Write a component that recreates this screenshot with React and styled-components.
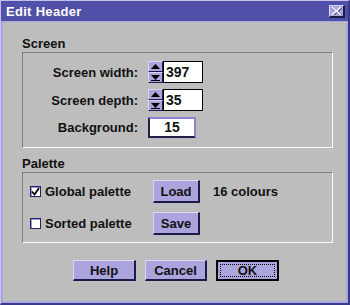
import styled, { createGlobalStyle } from "styled-components";

const GlobalStyle = createGlobalStyle`
  html, body {
    margin: 0;
    padding: 0;
    background: #3a3a8c;
  }
  body {
    font-family: "Liberation Sans", Arial, sans-serif;
    font-weight: bold;
    font-size: 13px;
    color: #111;
  }
`;

const Window = styled.div`
  width: 350px;
  height: 305px;
  box-sizing: border-box;
  display: flex;
  flex-direction: column;
  border-left: 1px solid #c8c0ec;
  border-top: 1px solid #c8c0ec;
  border-right: 2px solid #3a3a8c;
  border-bottom: 2px solid #3a3a8c;
  background: #5050a8;
`;

const TitleBar = styled.div`
  height: 20px;
  display: flex;
  align-items: center;
  justify-content: space-between;
  padding: 0 3px 0 5px;
  background: #5050a8;
  color: #fff;
  font-size: 13px;
  letter-spacing: 0.3px;
`;

const CloseButton = styled.div`
  width: 16px;
  height: 13px;
  box-sizing: border-box;
  display: flex;
  align-items: center;
  justify-content: center;
  background: #aca4dc;
  border-top: 1px solid #d8d2f4;
  border-left: 1px solid #d8d2f4;
  border-right: 2px solid #1c1c48;
  border-bottom: 2px solid #1c1c48;
`;

const Body = styled.div`
  flex: 1;
  display: flex;
  flex-direction: column;
  background: #bdbdbd;
  border: 2px solid #aca4dc;
  border-top-width: 1px;
  padding: 14px 13px 0 19px;
`;

const GroupLabel = styled.div`
  line-height: 15px;
  margin: ${(p) => (p.$first ? "0" : "8px")} 0 1px;
`;

const GroupBox = styled.div`
  border: 1px solid;
  border-color: #7c7c7c #fafafa #fafafa #7c7c7c;
  padding: ${(p) => p.$pad};
`;

const FieldGrid = styled.div`
  display: grid;
  grid-template-columns: 115px auto;
  column-gap: 10px;
  row-gap: 6px;
  align-items: center;
`;

const FieldLabel = styled.div`
  text-align: right;
`;

const Spin = styled.div`
  display: flex;
`;

const SpinButtons = styled.div`
  display: flex;
  flex-direction: column;
  width: 15px;
`;

const SpinButton = styled.div`
  height: 11px;
  box-sizing: border-box;
  display: flex;
  align-items: center;
  justify-content: center;
  background: #aca4dc;
  border-top: 1px solid #dcd6f6;
  border-left: 1px solid #dcd6f6;
  border-right: 1px solid #1c1c48;
  border-bottom: 1px solid #1c1c48;
`;

const NumberInput = styled.div`
  width: 40px;
  height: 22px;
  box-sizing: border-box;
  background: #fff;
  border: 1px solid #000;
  padding: 2px 0 0 2px;
  font-size: 14px;
  line-height: 17px;
`;

const DisplayField = styled.div`
  width: 48px;
  height: 21px;
  box-sizing: border-box;
  background: #fff;
  border: 2px solid;
  border-color: #8c84d0 #8c84d0 #20204a #20204a;
  text-align: center;
  font-size: 14px;
  line-height: 17px;
`;

const PaletteGrid = styled.div`
  display: grid;
  grid-template-columns: 123px 47px auto;
  row-gap: 9px;
  align-items: center;
`;

const CheckLabel = styled.div`
  display: flex;
  align-items: center;
  gap: 4px;
`;

const CheckBox = styled.div`
  width: 11px;
  height: 11px;
  box-sizing: border-box;
  display: flex;
  align-items: center;
  justify-content: center;
  background: #fff;
  border: 1px solid #24245a;
  box-shadow: inset 1px 1px 0 #9c94d8;
`;

const Button = styled.div`
  width: ${(p) => p.$w}px;
  height: ${(p) => p.$h}px;
  box-sizing: border-box;
  display: flex;
  align-items: center;
  justify-content: center;
  background: #aca4dc;
  border-top: 1px solid #dcd6f6;
  border-left: 1px solid #dcd6f6;
  border-right: 2px solid #1c1c48;
  border-bottom: 2px solid #1c1c48;
  font-size: 13px;
`;

const DefaultButton = styled.div`
  width: 63px;
  height: 21px;
  box-sizing: border-box;
  border: 2px solid #000;
  display: flex;
`;

const FocusFace = styled.div`
  flex: 1;
  display: flex;
  align-items: center;
  justify-content: center;
  background: #aca4dc;
  outline: 1px dotted #000;
  outline-offset: -3px;
`;

const Colours = styled.div`
  margin-left: 13px;
`;

const ButtonRow = styled.div`
  display: flex;
  justify-content: center;
  gap: 9px;
  margin-top: 17px;
  padding-right: 3px;
`;

const UpArrow = () => (
  <svg width="9" height="6" viewBox="0 0 9 6">
    <polygon points="4.5,0 9,5 0,5" fill="#000" />
  </svg>
);

const DownArrow = () => (
  <svg width="9" height="6" viewBox="0 0 9 6">
    <polygon points="0,0 9,0 4.5,5" fill="#000" />
    <rect x="0" y="5" width="9" height="1" fill="#000" />
  </svg>
);

const CloseIcon = () => (
  <svg width="11" height="8" viewBox="0 0 11 8">
    <path d="M1 0 L10 8 M10 0 L1 8" stroke="#3a3a8c" strokeWidth="2" transform="translate(0.6,0.6)" />
    <path d="M1 0 L10 8 M10 0 L1 8" stroke="#fff" strokeWidth="1.6" />
  </svg>
);

const Tick = () => (
  <svg width="9" height="9" viewBox="0 0 9 9">
    <path d="M1 4.5 L3.5 7.5 L8 1" stroke="#000" strokeWidth="1.8" fill="none" />
  </svg>
);

function SpinField({ value }) {
  return (
    <Spin>
      <SpinButtons>
        <SpinButton><UpArrow /></SpinButton>
        <SpinButton><DownArrow /></SpinButton>
      </SpinButtons>
      <NumberInput>{value}</NumberInput>
    </Spin>
  );
}

export default function App() {
  return (
    <>
      <GlobalStyle />
      <Window>
        <TitleBar>
          <span>Edit Header</span>
          <CloseButton><CloseIcon /></CloseButton>
        </TitleBar>
        <Body>
          <GroupLabel $first>Screen</GroupLabel>
          <GroupBox $pad="8px 0 9px 0">
            <FieldGrid>
              <FieldLabel>Screen width:</FieldLabel>
              <SpinField value="397" />
              <FieldLabel>Screen depth:</FieldLabel>
              <SpinField value="35" />
              <FieldLabel>Background:</FieldLabel>
              <DisplayField>15</DisplayField>
            </FieldGrid>
          </GroupBox>
          <GroupLabel>Palette</GroupLabel>
          <GroupBox $pad="7px 0 7px 7px">
            <PaletteGrid>
              <CheckLabel>
                <CheckBox><Tick /></CheckBox>
                Global palette
              </CheckLabel>
              <Button $w={47} $h={23}>Load</Button>
              <Colours>16 colours</Colours>
              <CheckLabel>
                <CheckBox />
                Sorted palette
              </CheckLabel>
              <Button $w={47} $h={23}>Save</Button>
              <span />
            </PaletteGrid>
          </GroupBox>
          <ButtonRow>
            <Button $w={63} $h={21}>Help</Button>
            <Button $w={62} $h={21}>Cancel</Button>
            <DefaultButton>
              <FocusFace>OK</FocusFace>
            </DefaultButton>
          </ButtonRow>
        </Body>
      </Window>
    </>
  );
}
